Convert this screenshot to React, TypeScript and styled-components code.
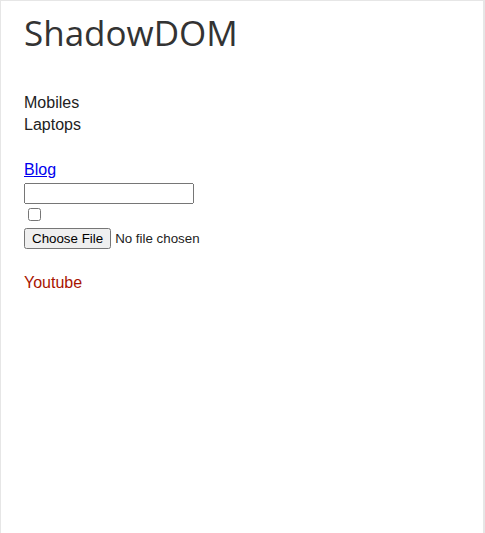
import React from "react";
import styled, { createGlobalStyle } from "styled-components";

const GlobalStyle = createGlobalStyle`
  html, body {
    margin: 0;
    padding: 0;
    background: #ffffff;
  }
`;

const Frame = styled.div`
  box-sizing: border-box;
  width: 485px;
  min-height: 533px;
  padding: 12px 23px 0;
  border: 1px solid #e6e6e6;
  border-bottom: none;
  border-right-width: 2px;
  background: #ffffff;
  font-family: "Liberation Sans", Arial, sans-serif;
  font-size: 16px;
  color: #222222;
`;

const Title = styled.h1`
  margin: 0;
  font-family: "Open Sans", "Liberation Sans", sans-serif;
  font-size: 35px;
  font-weight: 400;
  line-height: 40px;
  color: #333333;
`;

const MenuList = styled.ul`
  margin: 39px 0 0;
  padding: 0;
  list-style: none;
`;

const MenuItem = styled.li`
  line-height: 22px;
`;

const BlogLink = styled.a`
  display: inline-block;
  margin-top: 23px;
  line-height: 22px;
  color: #0000ee;
  text-decoration: underline;
`;

const Form = styled.div`
  display: flex;
  flex-direction: column;
  align-items: flex-start;
`;

const TextInput = styled.input`
  box-sizing: border-box;
  width: 170px;
  height: 21px;
  margin: 2px 0 0;
  font-family: "Liberation Sans", Arial, sans-serif;
  font-size: 13.33px;
`;

const CheckBox = styled.input`
  width: 13px;
  height: 13px;
  margin: 4px 0 0 4px;
`;

const FileInput = styled.input`
  margin: 7px 0 0;
  font-family: "Liberation Sans", Arial, sans-serif;
  font-size: 13.33px;
  color: #222222;
`;

const VideoLink = styled.div`
  margin-top: 23px;
  line-height: 22px;
  color: #a81400;
`;

export default function App() {
  return (
    <>
      <GlobalStyle />
      <Frame>
        <Title>ShadowDOM</Title>
        <MenuList>
          <MenuItem>Mobiles</MenuItem>
          <MenuItem>Laptops</MenuItem>
        </MenuList>
        <BlogLink href="#">Blog</BlogLink>
        <Form>
          <TextInput type="text" />
          <CheckBox type="checkbox" />
          <FileInput type="file" />
        </Form>
        <VideoLink>Youtube</VideoLink>
      </Frame>
    </>
  );
}
